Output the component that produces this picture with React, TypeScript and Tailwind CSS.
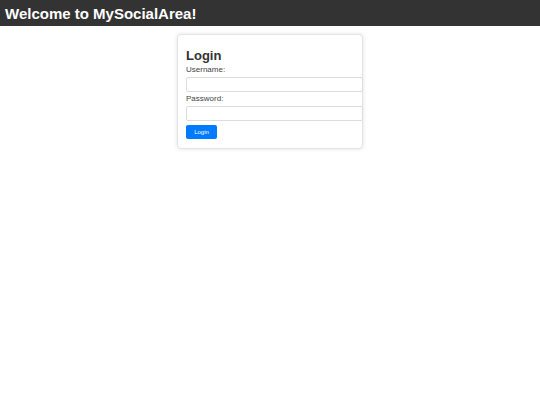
export default function App() {
  return (
    <div className="min-h-screen bg-white font-['Liberation_Sans',Arial,sans-serif] text-[#333]">
      {/* Header */}
      <header className="h-[26px] bg-[#333] pl-[5px] flex items-center">
        <h1 className="text-[15px] font-bold text-white leading-none">Welcome to MySocialArea!</h1>
      </header>

      {/* Login card */}
      <main className="flex justify-center">
        <div className="mt-[8px] w-[186px] rounded-[4px] border border-[#e4e4e4] bg-white px-[8px] pt-[13px] pb-[9px] shadow-[0_0_4px_rgba(0,0,0,0.12)]">
          <h2 className="text-[13px] leading-[15px] font-bold text-[#333]">Login</h2>
          <label className="mt-[2px] block text-[8px] leading-[9px] text-[#444]">Username:</label>
          <input
            type="text"
            className="mt-[3px] block h-[15px] w-[calc(100%+9px)] rounded-[2px] border border-[#ddd] bg-white outline-none"
          />
          <label className="mt-[2px] block text-[8px] leading-[9px] text-[#444]">Password:</label>
          <input
            type="password"
            className="mt-[3px] block h-[15px] w-[calc(100%+9px)] rounded-[2px] border border-[#ddd] bg-white outline-none"
          />
          <button className="mt-[4px] block h-[14px] w-[31px] rounded-[2px] bg-[#007bff] text-[6px] leading-[14px] text-white">
            Login
          </button>
        </div>
      </main>
    </div>
  );
}
